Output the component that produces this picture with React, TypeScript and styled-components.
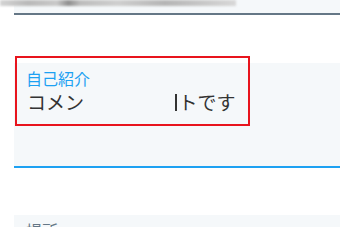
import styled, { createGlobalStyle } from 'styled-components';

const GlobalStyle = createGlobalStyle`
  html, body {
    margin: 0;
    padding: 0;
    background: #ffffff;
    overflow: hidden;
  }
  body {
    font-family: "Noto Sans CJK JP", "Noto Sans", sans-serif;
  }
`;

function App() {
  return (
    <>
      <GlobalStyle />
      <Page>
        <PrevField>
          <Banner />
        </PrevField>

        <Field active>
          <Label active>自己紹介</Label>
          <Value>
            コメン
            <Caret />
            トです
          </Value>
          <Highlight />
        </Field>

        <Field>
          <Label>場所</Label>
        </Field>
      </Page>
    </>
  );
}

const Page = styled.div`
  padding-left: 14px;
  width: 326px;
`;

const PrevField = styled.div`
  height: 13px;
  background: #f5f8fa;
  border-bottom: 2px solid #657786;
`;

const Banner = styled.div`
  margin-left: -14px;
  width: 236px;
  height: 6px;
  background: linear-gradient(
    90deg,
    #d4d4d4 0%,
    #b9b9b9 12%,
    #c9c9c9 24%,
    #8f8f8f 29%,
    #bdbdbd 34%,
    #cfcfcf 50%,
    #b5b5b5 70%,
    #d8d8d8 100%
  );
  filter: blur(1px);
`;

const Field = styled.div<{ active?: boolean }>`
  position: relative;
  box-sizing: border-box;
  margin-top: ${({ active }) => (active ? '48px' : '47px')};
  height: 105px;
  padding: 4px 12px 0;
  background: #f5f8fa;
  border-bottom: 2px solid ${({ active }) => (active ? '#1da1f2' : '#657786')};
`;

const Label = styled.div<{ active?: boolean }>`
  font-size: 16px;
  line-height: 22px;
  color: ${({ active }) => (active ? '#1da1f2' : '#657786')};
`;

const Value = styled.div`
  display: flex;
  align-items: center;
  height: 26px;
  font-size: 19px;
  line-height: 26px;
  color: #333333;
  padding-left: 1px;
`;

const Caret = styled.span`
  display: inline-block;
  width: 1.5px;
  height: 17px;
  margin-left: 91px;
  margin-right: 2px;
  background: #333333;
`;

const Highlight = styled.div`
  position: absolute;
  left: 1px;
  top: -7px;
  width: 231px;
  height: 66px;
  border: 2px solid #e8141d;
  pointer-events: none;
`;

export default App;
